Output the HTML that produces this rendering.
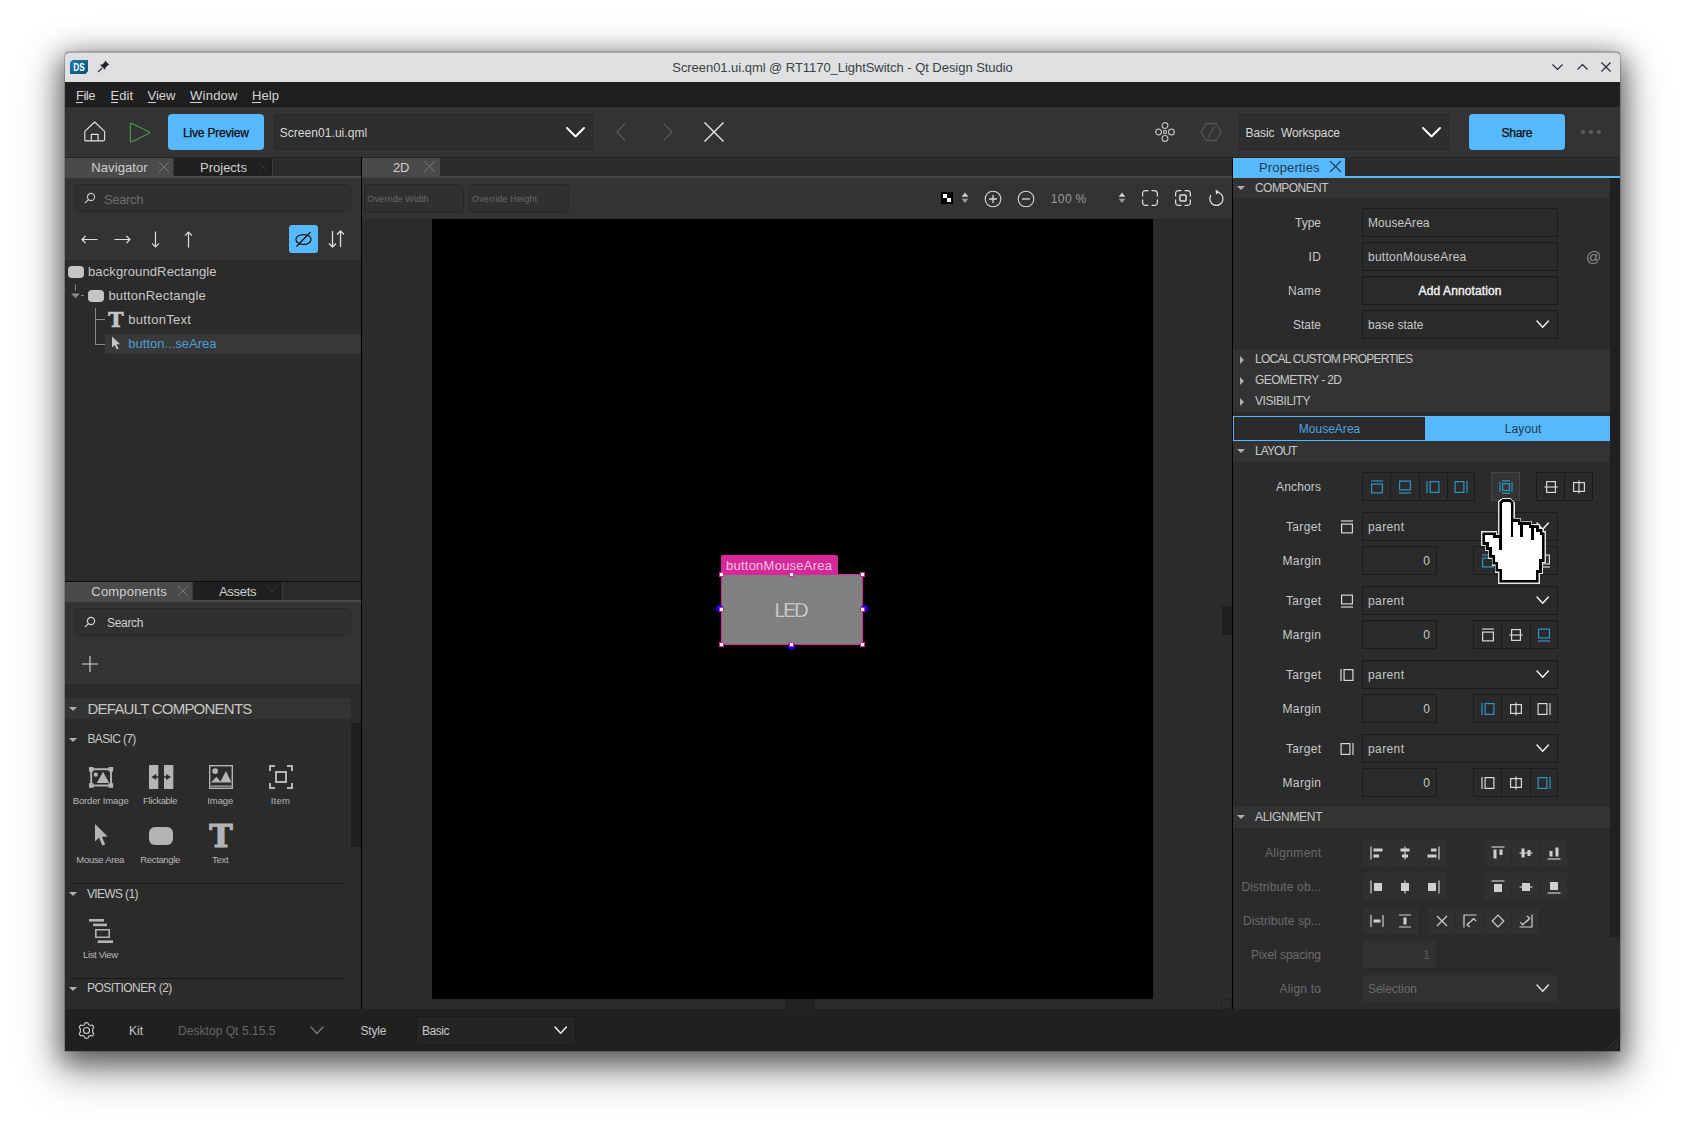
<!DOCTYPE html>
<html lang="en"><head><meta charset="utf-8"><title>Qt Design Studio</title><style>html,body{margin:0;padding:0}body{width:1685px;height:1128px;background:#ffffff;position:relative;overflow:hidden;font-family:"Liberation Sans", sans-serif}.a{position:absolute;display:block}.t{white-space:pre}svg{overflow:visible}</style></head><body>
<div class="a" style="left:65px;top:52px;width:1555px;height:999px;background:#1f1f1f;border-radius:4px 4px 0 0;box-shadow:0 0 0 0.5px rgba(0,0,0,.35),0 8px 26px 4px rgba(0,0,0,.50),0 16px 46px 6px rgba(0,0,0,.30);"></div>
<div class="a" style="left:65px;top:52px;width:1555px;height:30px;background:#dee0e2;border-radius:4px 4px 0 0;border-top:1px solid #a8aaac;box-sizing:border-box;"></div>
<span class="a t" style="left:672.25px;top:59.00px;font-size:13px;line-height:18px;color:#3d4145;letter-spacing:-0.045px;">Screen01.ui.qml @ RT1170_LightSwitch - Qt Design Studio</span>
<svg class="a" style="left:70px;top:60px;" width="18" height="14" viewBox="0 0 18 14"><defs><linearGradient id="dsg" x1="0" y1="0" x2="1" y2="1"><stop offset="0" stop-color="#1a7fb5"/><stop offset="1" stop-color="#0b4b73"/></linearGradient></defs><path d="M2.5 0 H18 V11 L15.5 14 H0 V2.5 Z" fill="url(#dsg)"/><text x="3.3" y="11" font-family="Liberation Sans, sans-serif" font-size="10.6" font-weight="700" fill="#fff" textLength="11.4" lengthAdjust="spacingAndGlyphs">DS</text></svg>
<svg class="a" style="left:97px;top:60px;" width="13" height="13" viewBox="0 0 13 13"><path d="M1 12 L5.2 7.8" stroke="#232629" stroke-width="1.1" fill="none"/><path d="M8.2 0.8 L12.2 4.8 L10.6 5.6 L8.4 7.8 L8.2 10 L3 4.8 L5.2 4.6 L7.4 2.4 Z" fill="#232629"/></svg>
<svg class="a" style="left:1552.0px;top:64px;" width="11" height="6" viewBox="0 0 11 6"><path d="M0.5 0.5 L5.5 5.5 L10.5 0.5" fill="none" stroke="#232629" stroke-width="1.1"/></svg>
<svg class="a" style="left:1576.5px;top:63.5px;" width="11" height="6" viewBox="0 0 11 6"><path d="M0.5 5.5 L5.5 0.5 L10.5 5.5" fill="none" stroke="#232629" stroke-width="1.1"/></svg>
<svg class="a" style="left:1601px;top:62px;" width="10" height="10" viewBox="0 0 10 10"><path d="M0.5 0.5 L9.5 9.5 M9.5 0.5 L0.5 9.5" fill="none" stroke="#232629" stroke-width="1.1"/></svg>
<div class="a" style="left:65px;top:82px;width:1555px;height:25px;background:#1f1f1f;"></div>
<span class="a t" style="left:76.00px;top:87.00px;font-size:13px;line-height:18px;color:#d6d6d6;letter-spacing:-0.484px;">File</span>
<div class="a" style="left:76px;top:102.3px;width:7px;height:1px;background:#d6d6d6;"></div>
<span class="a t" style="left:110.50px;top:87.00px;font-size:13px;line-height:18px;color:#d6d6d6;letter-spacing:0.031px;">Edit</span>
<div class="a" style="left:110.5px;top:102.3px;width:7.5px;height:1px;background:#d6d6d6;"></div>
<span class="a t" style="left:147.50px;top:87.00px;font-size:13px;line-height:18px;color:#d6d6d6;letter-spacing:0.016px;">View</span>
<div class="a" style="left:147.5px;top:102.3px;width:8px;height:1px;background:#d6d6d6;"></div>
<span class="a t" style="left:190.00px;top:87.00px;font-size:13px;line-height:18px;color:#d6d6d6;letter-spacing:0.250px;">Window</span>
<div class="a" style="left:190px;top:102.3px;width:11.5px;height:1px;background:#d6d6d6;"></div>
<span class="a t" style="left:252.00px;top:87.00px;font-size:13px;line-height:18px;color:#d6d6d6;letter-spacing:0.083px;">Help</span>
<div class="a" style="left:252px;top:102.3px;width:9px;height:1px;background:#d6d6d6;"></div>
<div class="a" style="left:65px;top:107px;width:1555px;height:50px;background:#333333;"></div>
<svg class="a" style="left:83.5px;top:120.8px;" width="21" height="21" viewBox="0 0 21 21"><path d="M0.8 10.4 L10.7 1 L20.6 10.4 V18.4 Q20.6 19.9 19.1 19.9 H2.3 Q0.8 19.9 0.8 18.4 Z M7.3 19.9 V13.3 H14.1 V19.9" fill="none" stroke="#e2e2e2" stroke-width="1.15" stroke-linejoin="round" stroke-linecap="round"/></svg>
<svg class="a" style="left:129px;top:121.5px;" width="22" height="21" viewBox="0 0 22 21"><path d="M2.4 1.3 Q1.3 0.8 1.3 2.1 V19.1 Q1.3 20.4 2.4 19.9 L20.2 11.2 Q21 10.6 20.2 10 Z" fill="none" stroke="#4c9a4c" stroke-width="1.15" stroke-linejoin="round"/></svg>
<div class="a" style="left:168px;top:114px;width:96px;height:36px;background:#57b9fc;border-radius:4px;"></div>
<span class="a t" style="left:183.00px;top:124.50px;font-size:12px;line-height:17px;color:#0b0b0b;letter-spacing:-0.185px;-webkit-text-stroke:0.25px #0b0b0b;">Live Preview</span>
<div class="a" style="left:274px;top:114px;width:319px;height:36px;background:#2e2e2e;border:1px solid #2a2a2a;box-sizing:border-box;border-radius:3px;"></div>
<span class="a t" style="left:279.70px;top:124.50px;font-size:12px;line-height:17px;color:#d8d8d8;letter-spacing:0.056px;">Screen01.ui.qml</span>
<svg class="a" style="left:566.5px;top:128.25px;" width="17" height="8.5" viewBox="0 0 17 8.5"><path d="M0 0 L8.5 8.5 L17 0" fill="none" stroke="#ffffff" stroke-width="2" stroke-linecap="round" stroke-linejoin="round"/></svg>
<svg class="a" style="left:616px;top:123px;" width="10" height="18" viewBox="0 0 10 18"><path d="M9 0.5 L1 9 L9 17.5" fill="none" stroke="#5a5a5a" stroke-width="1.2"/></svg>
<svg class="a" style="left:663px;top:123px;" width="10" height="18" viewBox="0 0 10 18"><path d="M1 0.5 L9 9 L1 17.5" fill="none" stroke="#5a5a5a" stroke-width="1.2"/></svg>
<svg class="a" style="left:703.5px;top:122px;" width="20" height="20" viewBox="0 0 20 20"><path d="M0.5 0.5 L19.5 19.5 M19.5 0.5 L0.5 19.5" fill="none" stroke="#f0f0f0" stroke-width="1.3"/></svg>
<svg class="a" style="left:1155px;top:122px;" width="20" height="20" viewBox="0 0 20 20"><g fill="none" stroke="#bdbdbd" stroke-width="1.2"><circle cx="10" cy="3.6" r="2.9"/><circle cx="10" cy="16.4" r="2.9"/><circle cx="3.6" cy="10" r="2.9"/><circle cx="16.4" cy="10" r="2.9"/><circle cx="10" cy="10" r="1.6"/></g></svg>
<svg class="a" style="left:1200px;top:122px;" width="22" height="20" viewBox="0 0 22 20"><g fill="none" stroke="#555" stroke-width="1.3" stroke-linejoin="round"><path d="M6 1.5 H16 L21 10 L16 18.5 H6 L1 10 Z"/><path d="M14.5 4.5 L8 15.5"/></g></svg>
<div class="a" style="left:1239px;top:114px;width:210px;height:36px;background:#2e2e2e;border:1px solid #2a2a2a;box-sizing:border-box;border-radius:3px;"></div>
<span class="a t" style="left:1245.50px;top:124.50px;font-size:12px;line-height:17px;color:#d8d8d8;letter-spacing:-0.087px;">Basic  Workspace</span>
<svg class="a" style="left:1422.5px;top:128.25px;" width="17" height="8.5" viewBox="0 0 17 8.5"><path d="M0 0 L8.5 8.5 L17 0" fill="none" stroke="#ffffff" stroke-width="2" stroke-linecap="round" stroke-linejoin="round"/></svg>
<div class="a" style="left:1469px;top:114px;width:96px;height:36px;background:#57b9fc;border-radius:4px;"></div>
<span class="a t" style="left:1501.50px;top:124.50px;font-size:12px;line-height:17px;color:#0b0b0b;letter-spacing:-0.258px;-webkit-text-stroke:0.25px #0b0b0b;">Share</span>
<div class="a" style="left:1581.2px;top:130.2px;width:4px;height:4px;background:#5e5e5e;border-radius:2px;"></div>
<div class="a" style="left:1589.1px;top:130.2px;width:4px;height:4px;background:#5e5e5e;border-radius:2px;"></div>
<div class="a" style="left:1597px;top:130.2px;width:4px;height:4px;background:#5e5e5e;border-radius:2px;"></div>
<div class="a" style="left:65px;top:157px;width:296px;height:852px;background:#2b2b2b;"></div>
<div class="a" style="left:361px;top:157px;width:1px;height:852px;background:#000;"></div>
<div class="a" style="left:65px;top:157px;width:296px;height:1px;background:#262626;"></div>
<div class="a" style="left:65px;top:158px;width:109px;height:18px;background:#4a4a4a;"></div>
<div class="a" style="left:174px;top:158px;width:98px;height:18px;background:#1f1f1f;"></div>
<div class="a" style="left:272px;top:158px;width:1px;height:18px;background:#3a3a3a;"></div>
<div class="a" style="left:173px;top:158px;width:1px;height:18px;background:#3a3a3a;"></div>
<div class="a" style="left:65px;top:176px;width:296px;height:2px;background:#4a4a4a;"></div>
<span class="a t" style="left:91.30px;top:159.00px;font-size:13px;line-height:18px;color:#d0d0d0;letter-spacing:0.095px;">Navigator</span>
<svg class="a" style="left:159px;top:162px;" width="10" height="10" viewBox="0 0 10 10"><path d="M0 0 L10 10 M10 0 L0 10" fill="none" stroke="#777" stroke-width="1"/></svg>
<span class="a t" style="left:200.00px;top:159.00px;font-size:13px;line-height:18px;color:#d0d0d0;letter-spacing:0.004px;">Projects</span>
<svg class="a" style="left:258px;top:162px;" width="10" height="10" viewBox="0 0 10 10"><path d="M0 0 L10 10 M10 0 L0 10" fill="none" stroke="#2e2e2e" stroke-width="1"/></svg>
<div class="a" style="left:65px;top:178px;width:296px;height:82px;background:#333333;"></div>
<div class="a" style="left:75px;top:184px;width:276px;height:28px;background:#303030;border:1px solid #282828;box-sizing:border-box;border-radius:4px;"></div>
<svg class="a" style="left:84px;top:192px;" width="12" height="12" viewBox="0 0 12 12"><circle cx="7" cy="5" r="3.6" fill="none" stroke="#c0c0c0" stroke-width="1.2"/><path d="M4.4 7.6 L1 11" stroke="#c0c0c0" stroke-width="1.2"/></svg>
<span class="a t" style="left:104.00px;top:191.00px;font-size:13px;line-height:18px;color:#6e6e6e;letter-spacing:-0.341px;">Search</span>
<svg class="a" style="left:80.5px;top:234.5px;" width="17" height="9" viewBox="0 0 17 9"><path d="M16.5 4.5 H1 M4.6 1 L1 4.5 L4.6 8" fill="none" stroke="#dcdcdc" stroke-width="1.2"/></svg>
<svg class="a" style="left:113.5px;top:234.5px;" width="17" height="9" viewBox="0 0 17 9"><path d="M0.5 4.5 H16 M12.4 1 L16 4.5 L12.4 8" fill="none" stroke="#dcdcdc" stroke-width="1.2"/></svg>
<svg class="a" style="left:150.5px;top:231px;" width="9" height="17" viewBox="0 0 9 17"><path d="M4.5 0.5 V16 M1 12.4 L4.5 16 L8 12.4" fill="none" stroke="#dcdcdc" stroke-width="1.2"/></svg>
<svg class="a" style="left:183.5px;top:231px;" width="9" height="17" viewBox="0 0 9 17"><path d="M4.5 16.5 V1 M1 4.6 L4.5 1 L8 4.6" fill="none" stroke="#dcdcdc" stroke-width="1.2"/></svg>
<div class="a" style="left:289px;top:225px;width:29px;height:28px;background:#57b9fc;border-radius:3px;"></div>
<svg class="a" style="left:294px;top:230px;" width="19" height="18" viewBox="0 0 19 18"><ellipse cx="9.5" cy="9.5" rx="7.6" ry="4.8" fill="none" stroke="#111" stroke-width="1.2"/><path d="M2.5 16.5 L16.5 2" stroke="#111" stroke-width="1.2"/></svg>
<svg class="a" style="left:328px;top:230px;" width="17" height="18" viewBox="0 0 17 18"><path d="M4.5 1 V17 M1 13.5 L4.5 17 L8 13.5 M12.5 17 V1 M9 4.5 L12.5 1 L16 4.5" fill="none" stroke="#dcdcdc" stroke-width="1.3"/></svg>
<div class="a" style="left:68px;top:266px;width:16px;height:12px;background:#c4c4c4;border-radius:4px;"></div>
<span class="a t" style="left:88.00px;top:263.00px;font-size:13px;line-height:18px;color:#c8c8c8;letter-spacing:0.118px;">backgroundRectangle</span>
<svg class="a" style="left:70px;top:284px;" width="16" height="16" viewBox="0 0 16 16"><path d="M5.5 0.5 V6.5" stroke="#888" stroke-width="1"/><path d="M1 9.5 H10 L5.5 14 Z" fill="#8c8c8c"/><path d="M11 11.5 H14" stroke="#888" stroke-width="1"/></svg>
<div class="a" style="left:88px;top:290px;width:16px;height:12px;background:#c4c4c4;border-radius:4px;"></div>
<span class="a t" style="left:108.40px;top:287.00px;font-size:13px;line-height:18px;color:#c8c8c8;letter-spacing:0.194px;">buttonRectangle</span>
<div class="a" style="left:95px;top:308px;width:1px;height:37px;background:#8a8a8a;"></div>
<div class="a" style="left:95px;top:319px;width:10px;height:1px;background:#8a8a8a;"></div>
<div class="a" style="left:95px;top:344px;width:10px;height:1px;background:#8a8a8a;"></div>
<span class="a t" style="left:108.33px;top:305.70px;font-size:20.5px;line-height:29px;color:#c4c4c4;font-weight:700;font-family:'DejaVu Serif',serif;-webkit-text-stroke:0.7px #c4c4c4;">T</span>
<span class="a t" style="left:128.30px;top:311.00px;font-size:13px;line-height:18px;color:#c8c8c8;letter-spacing:0.300px;">buttonText</span>
<div class="a" style="left:105px;top:334px;width:256px;height:20px;background:#383838;"></div>
<svg class="a" style="left:111px;top:336px;" width="10" height="15" viewBox="0 0 10 15"><path d="M1 0.5 V11.5 L3.8 8.9 L5.8 13.6 L7.6 12.8 L5.6 8.3 L9.2 8.3 Z" fill="#c4c4c4"/></svg>
<span class="a t" style="left:128.30px;top:335.00px;font-size:13px;line-height:18px;color:#4b9fd9;letter-spacing:0.009px;">button...seArea</span>
<div class="a" style="left:65px;top:581px;width:296px;height:1px;background:#0d0d0d;"></div>
<div class="a" style="left:65px;top:582px;width:128px;height:18px;background:#4a4a4a;"></div>
<div class="a" style="left:193px;top:582px;width:89px;height:18px;background:#1f1f1f;"></div>
<div class="a" style="left:282px;top:582px;width:1px;height:18px;background:#3a3a3a;"></div>
<div class="a" style="left:192px;top:582px;width:1px;height:18px;background:#3a3a3a;"></div>
<div class="a" style="left:65px;top:600px;width:296px;height:2px;background:#4a4a4a;"></div>
<span class="a t" style="left:91.30px;top:583.00px;font-size:13px;line-height:18px;color:#d0d0d0;letter-spacing:0.198px;">Components</span>
<svg class="a" style="left:177.5px;top:586px;" width="10" height="10" viewBox="0 0 10 10"><path d="M0 0 L10 10 M10 0 L0 10" fill="none" stroke="#777" stroke-width="1"/></svg>
<span class="a t" style="left:219.00px;top:583.00px;font-size:13px;line-height:18px;color:#d0d0d0;letter-spacing:-0.303px;">Assets</span>
<svg class="a" style="left:267px;top:586px;" width="10" height="10" viewBox="0 0 10 10"><path d="M0 0 L10 10 M10 0 L0 10" fill="none" stroke="#2e2e2e" stroke-width="1"/></svg>
<div class="a" style="left:65px;top:602px;width:296px;height:82px;background:#333333;"></div>
<div class="a" style="left:75px;top:608px;width:276px;height:28px;background:#303030;border:1px solid #282828;box-sizing:border-box;border-radius:4px;"></div>
<svg class="a" style="left:84px;top:616px;" width="12" height="12" viewBox="0 0 12 12"><circle cx="7" cy="5" r="3.6" fill="none" stroke="#d0d0d0" stroke-width="1.2"/><path d="M4.4 7.6 L1 11" stroke="#d0d0d0" stroke-width="1.2"/></svg>
<span class="a t" style="left:107.00px;top:615.00px;font-size:12px;line-height:17px;color:#d0d0d0;letter-spacing:-0.306px;">Search</span>
<svg class="a" style="left:81.5px;top:655.5px;" width="16" height="16" viewBox="0 0 16 16"><path d="M8 0 V16 M0 8 H16" stroke="#d8d8d8" stroke-width="1.1"/></svg>
<div class="a" style="left:65px;top:698px;width:286px;height:21px;background:#333333;"></div>
<svg class="a" style="left:69px;top:706.5px;" width="8" height="4" viewBox="0 0 8 4"><path d="M0 0 L8 0 L4 4 Z" fill="#b0b0b0"/></svg>
<span class="a t" style="left:87.50px;top:698.30px;font-size:15px;line-height:21px;color:#c8c8c8;letter-spacing:-0.765px;">DEFAULT COMPONENTS</span>
<div class="a" style="left:351px;top:723px;width:10px;height:124px;background:#202020;"></div>
<svg class="a" style="left:69px;top:737.5px;" width="8" height="4" viewBox="0 0 8 4"><path d="M0 0 L8 0 L4 4 Z" fill="#b0b0b0"/></svg>
<span class="a t" style="left:87.50px;top:731.30px;font-size:12px;line-height:17px;color:#c8c8c8;letter-spacing:-0.652px;">BASIC (7)</span>
<svg class="a" style="left:88.8px;top:765px;" width="24" height="24" viewBox="0 0 24 24"><rect x="2.2" y="4.2" width="19.8" height="16.3" fill="none" stroke="#b4b4b4" stroke-width="1.9"/><g fill="#b4b4b4"><rect x="0" y="2" width="4.6" height="4.6"/><rect x="19.6" y="2" width="4.6" height="4.6"/><rect x="0" y="18.2" width="4.6" height="4.6"/><rect x="19.6" y="18.2" width="4.6" height="4.6"/><circle cx="6.8" cy="9.7" r="2.1"/><path d="M7.8 18 L14 6.7 L20.2 18 Z"/></g></svg>
<span class="a t" style="left:72.70px;top:794.20px;font-size:9.5px;line-height:13px;color:#b8b8b8;letter-spacing:-0.142px;">Border Image</span>
<svg class="a" style="left:148.5px;top:765px;" width="24" height="24" viewBox="0 0 24 24"><g fill="#b4b4b4"><path d="M0 0 H9.3 V24 H0 Z M9.3 11.3 H7.3 V9 L2.3 12 L7.3 15 V12.7 H9.3 Z" fill-rule="evenodd"/><path d="M15 0 H24.3 V24 H15 Z M15 11.3 H17 V9 L22 12 L17 15 V12.7 H15 Z" fill-rule="evenodd"/></g></svg>
<span class="a t" style="left:143.05px;top:794.20px;font-size:9.5px;line-height:13px;color:#b8b8b8;letter-spacing:-0.375px;">Flickable</span>
<svg class="a" style="left:208.9px;top:765px;" width="24" height="24" viewBox="0 0 24 24"><rect x="0.7" y="0.7" width="22.6" height="22.6" fill="none" stroke="#b4b4b4" stroke-width="1.4"/><g fill="#b4b4b4"><circle cx="6.2" cy="6.1" r="2.9"/><path d="M2 17.6 L7.5 11.8 L11.4 16.6 L17 6 L22.5 17.6 Z"/><rect x="2" y="20.5" width="20.5" height="1.2"/></g></svg>
<span class="a t" style="left:207.30px;top:794.20px;font-size:9.5px;line-height:13px;color:#b8b8b8;letter-spacing:-0.102px;">Image</span>
<svg class="a" style="left:268.9px;top:765px;" width="24" height="24" viewBox="0 0 24 24"><g fill="none" stroke="#b4b4b4" stroke-width="2"><path d="M1 6 V1 H6 M18 1 H23 V6 M23 18 V23 H18 M6 23 H1 V18"/><rect x="7" y="7" width="10" height="10"/></g></svg>
<span class="a t" style="left:270.80px;top:794.20px;font-size:9.5px;line-height:13px;color:#b8b8b8;letter-spacing:0.172px;">Item</span>
<svg class="a" style="left:94px;top:824px;" width="14" height="24" viewBox="0 0 14 24"><path d="M1 0 V17.5 L5 13.7 L8.3 21.6 L11.2 20.4 L8 12.8 L13.6 12.6 Z" fill="#b4b4b4"/></svg>
<span class="a t" style="left:76.30px;top:853.20px;font-size:9.5px;line-height:13px;color:#b8b8b8;letter-spacing:-0.300px;">Mouse Area</span>
<div class="a" style="left:148.7px;top:827px;width:24.3px;height:18px;background:#b4b4b4;border-radius:6px;"></div>
<span class="a t" style="left:140.30px;top:853.20px;font-size:9.5px;line-height:13px;color:#b8b8b8;letter-spacing:-0.348px;">Rectangle</span>
<span class="a t" style="left:209.28px;top:814.30px;font-size:31.5px;line-height:44px;color:#b4b4b4;font-weight:700;font-family:'DejaVu Serif',serif;-webkit-text-stroke:1.05px #b4b4b4;">T</span>
<span class="a t" style="left:212.05px;top:853.20px;font-size:9.5px;line-height:13px;color:#b8b8b8;letter-spacing:-0.312px;">Text</span>
<div class="a" style="left:70px;top:883px;width:276px;height:1px;background:#1a1a1a;"></div>
<svg class="a" style="left:69px;top:892px;" width="8" height="4" viewBox="0 0 8 4"><path d="M0 0 L8 0 L4 4 Z" fill="#b0b0b0"/></svg>
<span class="a t" style="left:87.00px;top:885.80px;font-size:12px;line-height:17px;color:#c8c8c8;letter-spacing:-0.659px;">VIEWS (1)</span>
<svg class="a" style="left:88.8px;top:919px;" width="24" height="24" viewBox="0 0 24 24"><g fill="#b4b4b4"><rect x="0" y="0" width="15" height="2.6"/><rect x="4" y="4.6" width="14" height="2.6"/><rect x="8.7" y="21.4" width="15.3" height="2.6"/><path d="M6 10 H21 V19 H6 Z M7.6 11.6 V17.4 H19.4 V11.6 Z" fill-rule="evenodd"/></g></svg>
<span class="a t" style="left:83.00px;top:948.20px;font-size:9.5px;line-height:13px;color:#b8b8b8;letter-spacing:-0.355px;">List View</span>
<div class="a" style="left:70px;top:978px;width:276px;height:1px;background:#1a1a1a;"></div>
<svg class="a" style="left:69px;top:986.5px;" width="8" height="4" viewBox="0 0 8 4"><path d="M0 0 L8 0 L4 4 Z" fill="#b0b0b0"/></svg>
<span class="a t" style="left:87.00px;top:980.30px;font-size:12px;line-height:17px;color:#c8c8c8;letter-spacing:-0.517px;">POSITIONER (2)</span>
<div class="a" style="left:362px;top:157px;width:870px;height:852px;background:#2b2b2b;"></div>
<div class="a" style="left:362px;top:157px;width:870px;height:1px;background:#262626;"></div>
<div class="a" style="left:362px;top:158px;width:78px;height:18px;background:#4a4a4a;"></div>
<div class="a" style="left:362px;top:176px;width:870px;height:2px;background:#464646;"></div>
<span class="a t" style="left:393.00px;top:159.30px;font-size:13px;line-height:18px;color:#d0d0d0;letter-spacing:-0.125px;">2D</span>
<svg class="a" style="left:424.0px;top:161.0px;" width="11.0" height="11.0" viewBox="0 0 11.0 11.0"><path d="M0 0 L11.0 11.0 M11.0 0 L0 11.0" fill="none" stroke="#7a7a7a" stroke-width="1"/></svg>
<div class="a" style="left:362px;top:178px;width:870px;height:41px;background:#333333;"></div>
<div class="a" style="left:364px;top:184px;width:100px;height:28.5px;background:#303030;border:1px solid #282828;box-sizing:border-box;border-radius:4px;"></div>
<div class="a" style="left:469px;top:184px;width:100px;height:28.5px;background:#303030;border:1px solid #282828;box-sizing:border-box;border-radius:4px;"></div>
<span class="a t" style="left:367.30px;top:193.10px;font-size:9px;line-height:13px;color:#6a6a6a;letter-spacing:0.113px;">Override Width</span>
<span class="a t" style="left:472.00px;top:193.10px;font-size:9px;line-height:13px;color:#6a6a6a;letter-spacing:0.141px;">Override Height</span>
<div class="a" style="left:941px;top:192px;width:12px;height:12px;background:#000;"></div>
<div class="a" style="left:943px;top:194px;width:4px;height:4px;background:#fff;"></div>
<div class="a" style="left:947px;top:198px;width:4px;height:4px;background:#fff;"></div>
<svg class="a" style="left:961.4px;top:192px;" width="8" height="12" viewBox="0 0 8 12"><path d="M4 0.6 L7.4 4.8 H0.6 Z" fill="#cfcfcf"/><path d="M4 11 L7.4 6.8 H0.6 Z" fill="#9a9a9a"/></svg>
<svg class="a" style="left:984px;top:189.5px;" width="18" height="18" viewBox="0 0 18 18"><circle cx="9" cy="9" r="7.8" fill="none" stroke="#d6d6d6" stroke-width="1.1"/><path d="M9 5 V13 M5 9 H13" stroke="#d6d6d6" stroke-width="1.3"/></svg>
<svg class="a" style="left:1017px;top:189.5px;" width="18" height="18" viewBox="0 0 18 18"><circle cx="9" cy="9" r="7.8" fill="none" stroke="#d6d6d6" stroke-width="1.1"/><path d="M5 9 H13" stroke="#d6d6d6" stroke-width="1.3"/></svg>
<span class="a t" style="left:1050.80px;top:190.90px;font-size:12px;line-height:17px;color:#9a9a9a;letter-spacing:0.367px;">100 %</span>
<svg class="a" style="left:1118.3px;top:192px;" width="8" height="12" viewBox="0 0 8 12"><path d="M4 0.6 L7.4 4.8 H0.6 Z" fill="#cfcfcf"/><path d="M4 11 L7.4 6.8 H0.6 Z" fill="#9a9a9a"/></svg>
<svg class="a" style="left:1142px;top:190px;" width="16" height="16" viewBox="0 0 16 16"><g fill="none" stroke="#e0e0e0" stroke-width="1.2"><path d="M0.6 6.4 V3.8 Q0.6 0.6 3.8 0.6 H6.4"/><path d="M9.6 0.6 H12.2 Q15.4 0.6 15.4 3.8 V6.4"/><path d="M15.4 9.6 V12.2 Q15.4 15.4 12.2 15.4 H9.6"/><path d="M6.4 15.4 H3.8 Q0.6 15.4 0.6 12.2 V9.6"/></g></svg>
<svg class="a" style="left:1175px;top:190px;" width="16" height="16" viewBox="0 0 16 16"><g fill="none" stroke="#e0e0e0" stroke-width="1.2"><path d="M0.6 6.4 V3.8 Q0.6 0.6 3.8 0.6 H6.4"/><path d="M9.6 0.6 H12.2 Q15.4 0.6 15.4 3.8 V6.4"/><path d="M15.4 9.6 V12.2 Q15.4 15.4 12.2 15.4 H9.6"/><path d="M6.4 15.4 H3.8 Q0.6 15.4 0.6 12.2 V9.6"/></g><rect x="4.9" y="4.9" width="6.2" height="6.2" rx="1" fill="none" stroke="#e0e0e0" stroke-width="1.5"/></svg>
<svg class="a" style="left:1208px;top:189px;" width="16" height="18" viewBox="0 0 16 18"><path d="M8.6 3.2 A6.6 6.6 0 1 1 2.9 6.2" fill="none" stroke="#e0e0e0" stroke-width="1.2"/><path d="M7.6 0.6 L11.4 3 L8 5.6 Z" fill="#e0e0e0"/></svg>
<div class="a" style="left:432px;top:219px;width:721px;height:780px;background:#000;"></div>
<div class="a" style="left:785px;top:999px;width:30px;height:10px;background:#222;"></div>
<div class="a" style="left:1222px;top:606px;width:10px;height:29px;background:#1f1f1f;"></div>
<div class="a" style="left:1221px;top:999px;width:11px;height:10px;background:#2b2b2b;border:1px solid #242424;box-sizing:border-box;"></div>
<div class="a" style="left:721px;top:555px;width:117px;height:19px;background:#d6289b;border-radius:2px 2px 0 0;"></div>
<div class="a" style="left:721.5px;top:574px;width:141px;height:70px;background:#808080;"></div>
<div class="a" style="left:721px;top:573.5px;width:142px;height:71px;border:1px solid #d6289b;box-sizing:border-box;"></div>
<span class="a t" style="left:726.00px;top:556.50px;font-size:13px;line-height:18px;color:#f4c4e4;letter-spacing:0.241px;">buttonMouseArea</span>
<span class="a t" style="left:774.60px;top:596.30px;font-size:20px;line-height:28px;color:#e6e6e6;letter-spacing:-2.353px;-webkit-text-stroke:0.5px #808080;">LED</span>
<div class="a" style="left:716.0px;top:605.2px;width:7px;height:7px;background:#0000ee;border-radius:3.5px;"></div>
<div class="a" style="left:860.5px;top:605.2px;width:7px;height:7px;background:#0000ee;border-radius:3.5px;"></div>
<div class="a" style="left:788.3px;top:642.5px;width:7px;height:7px;background:#0000ee;border-radius:3.5px;"></div>
<div class="a" style="left:719.2px;top:571.5px;width:5px;height:5px;background:#fff;border:1px solid #d6289b;box-sizing:border-box;"></div>
<div class="a" style="left:789.3px;top:571.5px;width:5px;height:5px;background:#fff;border:1px solid #d6289b;box-sizing:border-box;"></div>
<div class="a" style="left:859.5px;top:571.5px;width:5px;height:5px;background:#fff;border:1px solid #d6289b;box-sizing:border-box;"></div>
<div class="a" style="left:719.2px;top:606.5px;width:5px;height:5px;background:#fff;border:1px solid #d6289b;box-sizing:border-box;"></div>
<div class="a" style="left:859.5px;top:606.5px;width:5px;height:5px;background:#fff;border:1px solid #d6289b;box-sizing:border-box;"></div>
<div class="a" style="left:719.2px;top:641.5px;width:5px;height:5px;background:#fff;border:1px solid #d6289b;box-sizing:border-box;"></div>
<div class="a" style="left:789.3px;top:641.5px;width:5px;height:5px;background:#fff;border:1px solid #d6289b;box-sizing:border-box;"></div>
<div class="a" style="left:859.5px;top:641.5px;width:5px;height:5px;background:#fff;border:1px solid #d6289b;box-sizing:border-box;"></div>
<div class="a" style="left:1232px;top:157px;width:1px;height:852px;background:#000;"></div>
<div class="a" style="left:1233px;top:157px;width:387px;height:852px;background:#2b2b2b;"></div>
<div class="a" style="left:1233px;top:157px;width:387px;height:1px;background:#262626;"></div>
<div class="a" style="left:1233px;top:158px;width:112px;height:18px;background:#57b9fc;"></div>
<div class="a" style="left:1233px;top:176px;width:387px;height:2px;background:#57b9fc;"></div>
<span class="a t" style="left:1259.00px;top:159.30px;font-size:13px;line-height:18px;color:#1d3a52;letter-spacing:0.139px;">Properties</span>
<svg class="a" style="left:1330.0px;top:161.0px;" width="11.0" height="11.0" viewBox="0 0 11.0 11.0"><path d="M0 0 L11.0 11.0 M11.0 0 L0 11.0" fill="none" stroke="#1f3c55" stroke-width="1.1"/></svg>
<div class="a" style="left:1610px;top:178px;width:10px;height:759px;background:#202020;"></div>
<div class="a" style="left:1610px;top:937px;width:10px;height:72px;background:#2b2b2b;"></div>
<div class="a" style="left:1233px;top:178px;width:377px;height:20px;background:#333333;"></div>
<svg class="a" style="left:1237px;top:185.7px;" width="8" height="4" viewBox="0 0 8 4"><path d="M0 0 L8 0 L4 4 Z" fill="#b0b0b0"/></svg>
<span class="a t" style="left:1255.00px;top:179.50px;font-size:12px;line-height:17px;color:#c8c8c8;letter-spacing:-0.562px;">COMPONENT</span>
<div class="a" style="left:1362px;top:208px;width:196px;height:29px;background:#2a2a2a;border:1px solid #1b1b1b;box-sizing:border-box;"></div>
<span class="a t" style="left:1295.00px;top:214.80px;font-size:12px;line-height:17px;color:#c8c8c8;letter-spacing:-0.005px;">Type</span>
<span class="a t" style="left:1368.00px;top:214.80px;font-size:12px;line-height:17px;color:#c8c8c8;letter-spacing:0.016px;">MouseArea</span>
<div class="a" style="left:1362px;top:242px;width:196px;height:29px;background:#2a2a2a;border:1px solid #1b1b1b;box-sizing:border-box;"></div>
<span class="a t" style="left:1308.50px;top:248.80px;font-size:12px;line-height:17px;color:#c8c8c8;letter-spacing:0.500px;">ID</span>
<span class="a t" style="left:1368.00px;top:248.80px;font-size:12px;line-height:17px;color:#c8c8c8;letter-spacing:0.255px;">buttonMouseArea</span>
<span class="a t" style="left:1585.88px;top:246.00px;font-size:15px;line-height:21px;color:#8c8c8c;">@</span>
<div class="a" style="left:1362px;top:276px;width:196px;height:29px;background:#2a2a2a;border:1px solid #1b1b1b;box-sizing:border-box;"></div>
<span class="a t" style="left:1288.00px;top:282.80px;font-size:12px;line-height:17px;color:#c8c8c8;letter-spacing:0.328px;">Name</span>
<span class="a t" style="left:1418.50px;top:283.00px;font-size:12px;line-height:17px;color:#f4f4f4;letter-spacing:0.123px;-webkit-text-stroke:0.35px #f4f4f4;">Add Annotation</span>
<div class="a" style="left:1362px;top:310px;width:196px;height:29px;background:#2a2a2a;border:1px solid #1b1b1b;box-sizing:border-box;"></div>
<span class="a t" style="left:1293.00px;top:316.80px;font-size:12px;line-height:17px;color:#c8c8c8;letter-spacing:-0.008px;">State</span>
<span class="a t" style="left:1368.00px;top:316.80px;font-size:12px;line-height:17px;color:#c8c8c8;letter-spacing:0.014px;">base state</span>
<svg class="a" style="left:1537.3px;top:321.4px;" width="11.4" height="6.2" viewBox="0 0 11.4 6.2"><path d="M0 0 L5.7 6.2 L11.4 0" fill="none" stroke="#f0f0f0" stroke-width="1.5" stroke-linecap="round" stroke-linejoin="round"/></svg>
<div class="a" style="left:1233px;top:349px;width:377px;height:63px;background:#333333;"></div>
<svg class="a" style="left:1239.5px;top:355.5px;" width="4" height="8" viewBox="0 0 4 8"><path d="M0 0 L4 4 L0 8 Z" fill="#b0b0b0"/></svg>
<span class="a t" style="left:1255.00px;top:351.00px;font-size:12px;line-height:17px;color:#c8c8c8;letter-spacing:-0.750px;">LOCAL CUSTOM PROPERTIES</span>
<svg class="a" style="left:1239.5px;top:376.5px;" width="4" height="8" viewBox="0 0 4 8"><path d="M0 0 L4 4 L0 8 Z" fill="#b0b0b0"/></svg>
<span class="a t" style="left:1255.00px;top:372.00px;font-size:12px;line-height:17px;color:#c8c8c8;letter-spacing:-0.604px;">GEOMETRY - 2D</span>
<svg class="a" style="left:1239.5px;top:397.5px;" width="4" height="8" viewBox="0 0 4 8"><path d="M0 0 L4 4 L0 8 Z" fill="#b0b0b0"/></svg>
<span class="a t" style="left:1255.00px;top:393.00px;font-size:12px;line-height:17px;color:#c8c8c8;letter-spacing:-0.429px;">VISIBILITY</span>
<div class="a" style="left:1233px;top:416px;width:377px;height:25px;background:#57b9fc;"></div>
<div class="a" style="left:1234px;top:417px;width:191px;height:23px;background:#2a2a2a;"></div>
<span class="a t" style="left:1298.75px;top:421.00px;font-size:12px;line-height:17px;color:#4ba3e0;letter-spacing:0.016px;">MouseArea</span>
<span class="a t" style="left:1504.75px;top:421.00px;font-size:12px;line-height:17px;color:#1d3a52;letter-spacing:0.094px;">Layout</span>
<div class="a" style="left:1233px;top:441px;width:377px;height:21px;background:#333333;"></div>
<svg class="a" style="left:1237px;top:449.2px;" width="8" height="4" viewBox="0 0 8 4"><path d="M0 0 L8 0 L4 4 Z" fill="#b0b0b0"/></svg>
<span class="a t" style="left:1255.00px;top:443.00px;font-size:12px;line-height:17px;color:#c8c8c8;letter-spacing:-0.925px;">LAYOUT</span>
<span class="a t" style="left:1276.00px;top:478.80px;font-size:12px;line-height:17px;color:#c8c8c8;letter-spacing:0.161px;">Anchors</span>
<div class="a" style="left:1362px;top:472px;width:113px;height:29px;background:#2a2a2a;border:1px solid #1b1b1b;box-sizing:border-box;"></div>
<div class="a" style="left:1390px;top:472px;width:1px;height:29px;background:#1b1b1b;"></div>
<div class="a" style="left:1419px;top:472px;width:1px;height:29px;background:#1b1b1b;"></div>
<div class="a" style="left:1447px;top:472px;width:1px;height:29px;background:#1b1b1b;"></div>
<svg class="a" style="left:1369.5px;top:479.5px;" width="14" height="14" viewBox="0 0 14 14"><path d="M1 1 H13" stroke="#2f95c8" stroke-width="1.2"/><rect x="1.6" y="4.1" width="10.8" height="8.8" fill="none" stroke="#2f95c8" stroke-width="1.2"/></svg>
<svg class="a" style="left:1397.5px;top:479.5px;" width="14" height="14" viewBox="0 0 14 14"><path d="M1 13 H13" stroke="#2f95c8" stroke-width="1.2"/><rect x="1.6" y="1.1" width="10.8" height="8.8" fill="none" stroke="#2f95c8" stroke-width="1.2"/></svg>
<svg class="a" style="left:1425.5px;top:479.5px;" width="14" height="14" viewBox="0 0 14 14"><path d="M1 1 V13" stroke="#2f95c8" stroke-width="1.2"/><rect x="4.1" y="1.6" width="8.8" height="10.8" fill="none" stroke="#2f95c8" stroke-width="1.2"/></svg>
<svg class="a" style="left:1453.5px;top:479.5px;" width="14" height="14" viewBox="0 0 14 14"><path d="M13 1 V13" stroke="#2f95c8" stroke-width="1.2"/><rect x="1.1" y="1.6" width="8.8" height="10.8" fill="none" stroke="#2f95c8" stroke-width="1.2"/></svg>
<div class="a" style="left:1491px;top:472px;width:29px;height:29px;background:#343434;border:1px solid #454545;box-sizing:border-box;"></div>
<svg class="a" style="left:1498.5px;top:479.5px;" width="14" height="14" viewBox="0 0 14 14"><path d="M1 2 V12 M13 2 V12 M3 0.8 H11 M3 13.2 H11" stroke="#2f95c8" stroke-width="1.2"/><rect x="3.6" y="3.6" width="6.8" height="6.8" fill="none" stroke="#2f95c8" stroke-width="1.2"/></svg>
<div class="a" style="left:1536px;top:472px;width:57px;height:29px;background:#2a2a2a;border:1px solid #1b1b1b;box-sizing:border-box;"></div>
<div class="a" style="left:1564px;top:472px;width:1px;height:29px;background:#1b1b1b;"></div>
<svg class="a" style="left:1543.5px;top:479.5px;" width="14" height="14" viewBox="0 0 14 14"><path d="M0.5 7 H13.5" stroke="#d8d8d8" stroke-width="1.2"/><rect x="2.6" y="1.6" width="8.8" height="10.8" fill="none" stroke="#d8d8d8" stroke-width="1.2"/></svg>
<svg class="a" style="left:1571.5px;top:479.5px;" width="14" height="14" viewBox="0 0 14 14"><path d="M7 0.5 V13.5" stroke="#d8d8d8" stroke-width="1.2"/><rect x="1.6" y="2.6" width="10.8" height="8.8" fill="none" stroke="#d8d8d8" stroke-width="1.2"/></svg>
<span class="a t" style="left:1286.00px;top:518.80px;font-size:12px;line-height:17px;color:#c8c8c8;letter-spacing:0.328px;">Target</span>
<svg class="a" style="left:1340px;top:519.5px;" width="14" height="14" viewBox="0 0 14 14"><path d="M1 1 H13" stroke="#d8d8d8" stroke-width="1.2"/><rect x="1.6" y="4.1" width="10.8" height="8.8" fill="none" stroke="#d8d8d8" stroke-width="1.2"/></svg>
<div class="a" style="left:1362px;top:512px;width:196px;height:29px;background:#2a2a2a;border:1px solid #1b1b1b;box-sizing:border-box;"></div>
<span class="a t" style="left:1368.00px;top:518.80px;font-size:12px;line-height:17px;color:#c8c8c8;letter-spacing:0.394px;">parent</span>
<svg class="a" style="left:1537.3px;top:523.4px;" width="11.4" height="6.2" viewBox="0 0 11.4 6.2"><path d="M0 0 L5.7 6.2 L11.4 0" fill="none" stroke="#f0f0f0" stroke-width="1.5" stroke-linecap="round" stroke-linejoin="round"/></svg>
<span class="a t" style="left:1282.50px;top:552.80px;font-size:12px;line-height:17px;color:#c8c8c8;letter-spacing:0.362px;">Margin</span>
<div class="a" style="left:1362px;top:546px;width:75px;height:29px;background:#2a2a2a;border:1px solid #1b1b1b;box-sizing:border-box;"></div>
<span class="a t" style="left:1423.30px;top:552.80px;font-size:12px;line-height:17px;color:#c8c8c8;">0</span>
<div class="a" style="left:1473px;top:546px;width:85px;height:29px;background:#2a2a2a;border:1px solid #1b1b1b;box-sizing:border-box;"></div>
<div class="a" style="left:1501px;top:546px;width:1px;height:29px;background:#1b1b1b;"></div>
<div class="a" style="left:1530px;top:546px;width:1px;height:29px;background:#1b1b1b;"></div>
<svg class="a" style="left:1480.5px;top:553.5px;" width="14" height="14" viewBox="0 0 14 14"><path d="M1 1 H13" stroke="#2f95c8" stroke-width="1.2"/><rect x="1.6" y="4.1" width="10.8" height="8.8" fill="none" stroke="#2f95c8" stroke-width="1.2"/></svg>
<svg class="a" style="left:1508.5px;top:553.5px;" width="14" height="14" viewBox="0 0 14 14"><path d="M0.5 7 H13.5" stroke="#d8d8d8" stroke-width="1.2"/><rect x="2.6" y="1.6" width="8.8" height="10.8" fill="none" stroke="#d8d8d8" stroke-width="1.2"/></svg>
<svg class="a" style="left:1536.5px;top:553.5px;" width="14" height="14" viewBox="0 0 14 14"><path d="M1 13 H13" stroke="#d8d8d8" stroke-width="1.2"/><rect x="1.6" y="1.1" width="10.8" height="8.8" fill="none" stroke="#d8d8d8" stroke-width="1.2"/></svg>
<span class="a t" style="left:1286.00px;top:592.80px;font-size:12px;line-height:17px;color:#c8c8c8;letter-spacing:0.328px;">Target</span>
<svg class="a" style="left:1340px;top:593.5px;" width="14" height="14" viewBox="0 0 14 14"><path d="M1 13 H13" stroke="#d8d8d8" stroke-width="1.2"/><rect x="1.6" y="1.1" width="10.8" height="8.8" fill="none" stroke="#d8d8d8" stroke-width="1.2"/></svg>
<div class="a" style="left:1362px;top:586px;width:196px;height:29px;background:#2a2a2a;border:1px solid #1b1b1b;box-sizing:border-box;"></div>
<span class="a t" style="left:1368.00px;top:592.80px;font-size:12px;line-height:17px;color:#c8c8c8;letter-spacing:0.394px;">parent</span>
<svg class="a" style="left:1537.3px;top:597.4px;" width="11.4" height="6.2" viewBox="0 0 11.4 6.2"><path d="M0 0 L5.7 6.2 L11.4 0" fill="none" stroke="#f0f0f0" stroke-width="1.5" stroke-linecap="round" stroke-linejoin="round"/></svg>
<span class="a t" style="left:1282.50px;top:626.80px;font-size:12px;line-height:17px;color:#c8c8c8;letter-spacing:0.362px;">Margin</span>
<div class="a" style="left:1362px;top:620px;width:75px;height:29px;background:#2a2a2a;border:1px solid #1b1b1b;box-sizing:border-box;"></div>
<span class="a t" style="left:1423.30px;top:626.80px;font-size:12px;line-height:17px;color:#c8c8c8;">0</span>
<div class="a" style="left:1473px;top:620px;width:85px;height:29px;background:#2a2a2a;border:1px solid #1b1b1b;box-sizing:border-box;"></div>
<div class="a" style="left:1501px;top:620px;width:1px;height:29px;background:#1b1b1b;"></div>
<div class="a" style="left:1530px;top:620px;width:1px;height:29px;background:#1b1b1b;"></div>
<svg class="a" style="left:1480.5px;top:627.5px;" width="14" height="14" viewBox="0 0 14 14"><path d="M1 1 H13" stroke="#d8d8d8" stroke-width="1.2"/><rect x="1.6" y="4.1" width="10.8" height="8.8" fill="none" stroke="#d8d8d8" stroke-width="1.2"/></svg>
<svg class="a" style="left:1508.5px;top:627.5px;" width="14" height="14" viewBox="0 0 14 14"><path d="M0.5 7 H13.5" stroke="#d8d8d8" stroke-width="1.2"/><rect x="2.6" y="1.6" width="8.8" height="10.8" fill="none" stroke="#d8d8d8" stroke-width="1.2"/></svg>
<svg class="a" style="left:1536.5px;top:627.5px;" width="14" height="14" viewBox="0 0 14 14"><path d="M1 13 H13" stroke="#2f95c8" stroke-width="1.2"/><rect x="1.6" y="1.1" width="10.8" height="8.8" fill="none" stroke="#2f95c8" stroke-width="1.2"/></svg>
<span class="a t" style="left:1286.00px;top:666.80px;font-size:12px;line-height:17px;color:#c8c8c8;letter-spacing:0.328px;">Target</span>
<svg class="a" style="left:1340px;top:667.5px;" width="14" height="14" viewBox="0 0 14 14"><path d="M1 1 V13" stroke="#d8d8d8" stroke-width="1.2"/><rect x="4.1" y="1.6" width="8.8" height="10.8" fill="none" stroke="#d8d8d8" stroke-width="1.2"/></svg>
<div class="a" style="left:1362px;top:660px;width:196px;height:29px;background:#2a2a2a;border:1px solid #1b1b1b;box-sizing:border-box;"></div>
<span class="a t" style="left:1368.00px;top:666.80px;font-size:12px;line-height:17px;color:#c8c8c8;letter-spacing:0.394px;">parent</span>
<svg class="a" style="left:1537.3px;top:671.4px;" width="11.4" height="6.2" viewBox="0 0 11.4 6.2"><path d="M0 0 L5.7 6.2 L11.4 0" fill="none" stroke="#f0f0f0" stroke-width="1.5" stroke-linecap="round" stroke-linejoin="round"/></svg>
<span class="a t" style="left:1282.50px;top:700.80px;font-size:12px;line-height:17px;color:#c8c8c8;letter-spacing:0.362px;">Margin</span>
<div class="a" style="left:1362px;top:694px;width:75px;height:29px;background:#2a2a2a;border:1px solid #1b1b1b;box-sizing:border-box;"></div>
<span class="a t" style="left:1423.30px;top:700.80px;font-size:12px;line-height:17px;color:#c8c8c8;">0</span>
<div class="a" style="left:1473px;top:694px;width:85px;height:29px;background:#2a2a2a;border:1px solid #1b1b1b;box-sizing:border-box;"></div>
<div class="a" style="left:1501px;top:694px;width:1px;height:29px;background:#1b1b1b;"></div>
<div class="a" style="left:1530px;top:694px;width:1px;height:29px;background:#1b1b1b;"></div>
<svg class="a" style="left:1480.5px;top:701.5px;" width="14" height="14" viewBox="0 0 14 14"><path d="M1 1 V13" stroke="#2f95c8" stroke-width="1.2"/><rect x="4.1" y="1.6" width="8.8" height="10.8" fill="none" stroke="#2f95c8" stroke-width="1.2"/></svg>
<svg class="a" style="left:1508.5px;top:701.5px;" width="14" height="14" viewBox="0 0 14 14"><path d="M7 0.5 V13.5" stroke="#d8d8d8" stroke-width="1.2"/><rect x="1.6" y="2.6" width="10.8" height="8.8" fill="none" stroke="#d8d8d8" stroke-width="1.2"/></svg>
<svg class="a" style="left:1536.5px;top:701.5px;" width="14" height="14" viewBox="0 0 14 14"><path d="M13 1 V13" stroke="#d8d8d8" stroke-width="1.2"/><rect x="1.1" y="1.6" width="8.8" height="10.8" fill="none" stroke="#d8d8d8" stroke-width="1.2"/></svg>
<span class="a t" style="left:1286.00px;top:740.80px;font-size:12px;line-height:17px;color:#c8c8c8;letter-spacing:0.328px;">Target</span>
<svg class="a" style="left:1340px;top:741.5px;" width="14" height="14" viewBox="0 0 14 14"><path d="M13 1 V13" stroke="#d8d8d8" stroke-width="1.2"/><rect x="1.1" y="1.6" width="8.8" height="10.8" fill="none" stroke="#d8d8d8" stroke-width="1.2"/></svg>
<div class="a" style="left:1362px;top:734px;width:196px;height:29px;background:#2a2a2a;border:1px solid #1b1b1b;box-sizing:border-box;"></div>
<span class="a t" style="left:1368.00px;top:740.80px;font-size:12px;line-height:17px;color:#c8c8c8;letter-spacing:0.394px;">parent</span>
<svg class="a" style="left:1537.3px;top:745.4px;" width="11.4" height="6.2" viewBox="0 0 11.4 6.2"><path d="M0 0 L5.7 6.2 L11.4 0" fill="none" stroke="#f0f0f0" stroke-width="1.5" stroke-linecap="round" stroke-linejoin="round"/></svg>
<span class="a t" style="left:1282.50px;top:774.80px;font-size:12px;line-height:17px;color:#c8c8c8;letter-spacing:0.362px;">Margin</span>
<div class="a" style="left:1362px;top:768px;width:75px;height:29px;background:#2a2a2a;border:1px solid #1b1b1b;box-sizing:border-box;"></div>
<span class="a t" style="left:1423.30px;top:774.80px;font-size:12px;line-height:17px;color:#c8c8c8;">0</span>
<div class="a" style="left:1473px;top:768px;width:85px;height:29px;background:#2a2a2a;border:1px solid #1b1b1b;box-sizing:border-box;"></div>
<div class="a" style="left:1501px;top:768px;width:1px;height:29px;background:#1b1b1b;"></div>
<div class="a" style="left:1530px;top:768px;width:1px;height:29px;background:#1b1b1b;"></div>
<svg class="a" style="left:1480.5px;top:775.5px;" width="14" height="14" viewBox="0 0 14 14"><path d="M1 1 V13" stroke="#d8d8d8" stroke-width="1.2"/><rect x="4.1" y="1.6" width="8.8" height="10.8" fill="none" stroke="#d8d8d8" stroke-width="1.2"/></svg>
<svg class="a" style="left:1508.5px;top:775.5px;" width="14" height="14" viewBox="0 0 14 14"><path d="M7 0.5 V13.5" stroke="#d8d8d8" stroke-width="1.2"/><rect x="1.6" y="2.6" width="10.8" height="8.8" fill="none" stroke="#d8d8d8" stroke-width="1.2"/></svg>
<svg class="a" style="left:1536.5px;top:775.5px;" width="14" height="14" viewBox="0 0 14 14"><path d="M13 1 V13" stroke="#2f95c8" stroke-width="1.2"/><rect x="1.1" y="1.6" width="8.8" height="10.8" fill="none" stroke="#2f95c8" stroke-width="1.2"/></svg>
<div class="a" style="left:1233px;top:807px;width:377px;height:21px;background:#333333;"></div>
<svg class="a" style="left:1237px;top:815.2px;" width="8" height="4" viewBox="0 0 8 4"><path d="M0 0 L8 0 L4 4 Z" fill="#b0b0b0"/></svg>
<span class="a t" style="left:1255.00px;top:809.00px;font-size:12px;line-height:17px;color:#c8c8c8;letter-spacing:-0.314px;">ALIGNMENT</span>
<span class="a t" style="left:1265.00px;top:844.80px;font-size:12px;line-height:17px;color:#6c6c6c;letter-spacing:0.328px;">Alignment</span>
<span class="a t" style="left:1241.50px;top:878.80px;font-size:12px;line-height:17px;color:#6c6c6c;letter-spacing:0.142px;">Distribute ob...</span>
<span class="a t" style="left:1243.00px;top:912.80px;font-size:12px;line-height:17px;color:#6c6c6c;letter-spacing:0.086px;">Distribute sp...</span>
<span class="a t" style="left:1251.00px;top:946.80px;font-size:12px;line-height:17px;color:#6c6c6c;letter-spacing:-0.060px;">Pixel spacing</span>
<span class="a t" style="left:1279.50px;top:980.80px;font-size:12px;line-height:17px;color:#6c6c6c;letter-spacing:0.210px;">Align to</span>
<div class="a" style="left:1363.0px;top:839.0px;width:27px;height:27px;background:#303030;"></div>
<svg class="a" style="left:1369.5px;top:845.5px;" width="14" height="14" viewBox="0 0 14 14"><path d="M1 0.5 V13.5" stroke="#cfcfcf" stroke-width="1.2" fill="none"/><rect x="3.5" y="2.5" width="9" height="3" fill="#cfcfcf"/><rect x="3.5" y="8.5" width="5.5" height="3" fill="#cfcfcf"/></svg>
<div class="a" style="left:1391.0px;top:839.0px;width:27px;height:27px;background:#303030;"></div>
<svg class="a" style="left:1397.5px;top:845.5px;" width="14" height="14" viewBox="0 0 14 14"><path d="M7 0.5 V13.5" stroke="#cfcfcf" stroke-width="1.2" fill="none"/><rect x="2.5" y="2.5" width="9" height="3" fill="#cfcfcf"/><rect x="4" y="8.5" width="6" height="3" fill="#cfcfcf"/></svg>
<div class="a" style="left:1419.0px;top:839.0px;width:27px;height:27px;background:#303030;"></div>
<svg class="a" style="left:1425.5px;top:845.5px;" width="14" height="14" viewBox="0 0 14 14"><path d="M13 0.5 V13.5" stroke="#cfcfcf" stroke-width="1.2" fill="none"/><rect x="5" y="2.5" width="5.5" height="3" fill="#cfcfcf"/><rect x="1.5" y="8.5" width="9" height="3" fill="#cfcfcf"/></svg>
<div class="a" style="left:1484.0px;top:839.0px;width:27px;height:27px;background:#303030;"></div>
<svg class="a" style="left:1490.5px;top:845.5px;" width="14" height="14" viewBox="0 0 14 14"><path d="M0.5 1 H13.5" stroke="#cfcfcf" stroke-width="1.2" fill="none"/><rect x="2.5" y="3.5" width="3" height="9" fill="#cfcfcf"/><rect x="8.5" y="3.5" width="3" height="5.5" fill="#cfcfcf"/></svg>
<div class="a" style="left:1512.0px;top:839.0px;width:27px;height:27px;background:#303030;"></div>
<svg class="a" style="left:1518.5px;top:845.5px;" width="14" height="14" viewBox="0 0 14 14"><path d="M0.5 7 H13.5" stroke="#cfcfcf" stroke-width="1.2" fill="none"/><rect x="2.5" y="2.5" width="3" height="9" fill="#cfcfcf"/><rect x="8.5" y="4" width="3" height="6" fill="#cfcfcf"/></svg>
<div class="a" style="left:1540.0px;top:839.0px;width:27px;height:27px;background:#303030;"></div>
<svg class="a" style="left:1546.5px;top:845.5px;" width="14" height="14" viewBox="0 0 14 14"><path d="M0.5 13 H13.5" stroke="#cfcfcf" stroke-width="1.2" fill="none"/><rect x="2.5" y="5" width="3" height="5.5" fill="#cfcfcf"/><rect x="8.5" y="1.5" width="3" height="9" fill="#cfcfcf"/></svg>
<div class="a" style="left:1363.0px;top:873.0px;width:27px;height:27px;background:#303030;"></div>
<svg class="a" style="left:1369.5px;top:879.5px;" width="14" height="14" viewBox="0 0 14 14"><path d="M1 0.5 V13.5" stroke="#cfcfcf" stroke-width="1.2" fill="none"/><rect x="4" y="3" width="8" height="8" fill="#cfcfcf"/></svg>
<div class="a" style="left:1391.0px;top:873.0px;width:27px;height:27px;background:#303030;"></div>
<svg class="a" style="left:1397.5px;top:879.5px;" width="14" height="14" viewBox="0 0 14 14"><path d="M7 0.5 V13.5" stroke="#cfcfcf" stroke-width="1.2" fill="none"/><rect x="3" y="3" width="8" height="8" fill="#cfcfcf"/></svg>
<div class="a" style="left:1419.0px;top:873.0px;width:27px;height:27px;background:#303030;"></div>
<svg class="a" style="left:1425.5px;top:879.5px;" width="14" height="14" viewBox="0 0 14 14"><path d="M13 0.5 V13.5" stroke="#cfcfcf" stroke-width="1.2" fill="none"/><rect x="2" y="3" width="8" height="8" fill="#cfcfcf"/></svg>
<div class="a" style="left:1484.0px;top:873.0px;width:27px;height:27px;background:#303030;"></div>
<svg class="a" style="left:1490.5px;top:879.5px;" width="14" height="14" viewBox="0 0 14 14"><path d="M0.5 1 H13.5" stroke="#cfcfcf" stroke-width="1.2" fill="none"/><rect x="3" y="4" width="8" height="8" fill="#cfcfcf"/></svg>
<div class="a" style="left:1512.0px;top:873.0px;width:27px;height:27px;background:#303030;"></div>
<svg class="a" style="left:1518.5px;top:879.5px;" width="14" height="14" viewBox="0 0 14 14"><path d="M0.5 7 H13.5" stroke="#cfcfcf" stroke-width="1.2" fill="none"/><rect x="3" y="3" width="8" height="8" fill="#cfcfcf"/></svg>
<div class="a" style="left:1540.0px;top:873.0px;width:27px;height:27px;background:#303030;"></div>
<svg class="a" style="left:1546.5px;top:879.5px;" width="14" height="14" viewBox="0 0 14 14"><path d="M0.5 13 H13.5" stroke="#cfcfcf" stroke-width="1.2" fill="none"/><rect x="3" y="2" width="8" height="8" fill="#cfcfcf"/></svg>
<div class="a" style="left:1363.0px;top:907.0px;width:27px;height:27px;background:#303030;"></div>
<svg class="a" style="left:1369.5px;top:913.5px;" width="14" height="14" viewBox="0 0 14 14"><path d="M1 1 V13 M13 1 V13" stroke="#cfcfcf" stroke-width="1.2" fill="none"/><rect x="3.5" y="5.5" width="7" height="3" fill="#cfcfcf"/></svg>
<div class="a" style="left:1391.0px;top:907.0px;width:27px;height:27px;background:#303030;"></div>
<svg class="a" style="left:1397.5px;top:913.5px;" width="14" height="14" viewBox="0 0 14 14"><path d="M1 1 H13 M1 13 H13" stroke="#cfcfcf" stroke-width="1.2" fill="none"/><rect x="5.5" y="3.5" width="3" height="7" fill="#cfcfcf"/></svg>
<div class="a" style="left:1428.0px;top:907.0px;width:27px;height:27px;background:#303030;"></div>
<svg class="a" style="left:1434.5px;top:913.5px;" width="14" height="14" viewBox="0 0 14 14"><path d="M2 2 L12 12 M12 2 L2 12" stroke="#cfcfcf" stroke-width="1.2" fill="none"/></svg>
<div class="a" style="left:1456.0px;top:907.0px;width:27px;height:27px;background:#303030;"></div>
<svg class="a" style="left:1462.5px;top:913.5px;" width="14" height="14" viewBox="0 0 14 14"><path d="M1 13.5 V1 H13.5" stroke="#cfcfcf" stroke-width="1.2" fill="none"/><path d="M4 10.8 L10.6 5 M6.6 8.2 L4 10.8 L6.8 13 M8.6 6.2 L10.8 4.6 L13 7.2" stroke="#cfcfcf" stroke-width="1.2" fill="none"/></svg>
<div class="a" style="left:1484.0px;top:907.0px;width:27px;height:27px;background:#303030;"></div>
<svg class="a" style="left:1490.5px;top:913.5px;" width="14" height="14" viewBox="0 0 14 14"><path d="M7 1.2 L12.8 7 L7 12.8 L1.2 7 Z" stroke="#cfcfcf" stroke-width="1.2" fill="none"/></svg>
<div class="a" style="left:1512.0px;top:907.0px;width:27px;height:27px;background:#303030;"></div>
<svg class="a" style="left:1518.5px;top:913.5px;" width="14" height="14" viewBox="0 0 14 14"><path d="M0.5 13 H13 V0.5" stroke="#cfcfcf" stroke-width="1.2" fill="none"/><path d="M3.6 10.6 L10.4 4.6 M1.4 8.2 L3.6 10.8 L6 8.6 M8 2 L10.6 4.4 L8.4 7" stroke="#cfcfcf" stroke-width="1.2" fill="none"/></svg>
<div class="a" style="left:1363px;top:941px;width:73px;height:27px;background:#313131;"></div>
<span class="a t" style="left:1423.30px;top:946.80px;font-size:12px;line-height:17px;color:#5e5e5e;">1</span>
<div class="a" style="left:1363px;top:975px;width:194px;height:27px;background:#313131;"></div>
<span class="a t" style="left:1368.00px;top:980.80px;font-size:12px;line-height:17px;color:#6c6c6c;letter-spacing:-0.047px;">Selection</span>
<svg class="a" style="left:1537.3px;top:985.4px;" width="11.4" height="6.2" viewBox="0 0 11.4 6.2"><path d="M0 0 L5.7 6.2 L11.4 0" fill="none" stroke="#e0e0e0" stroke-width="1.5" stroke-linecap="round" stroke-linejoin="round"/></svg>
<div class="a" style="left:65px;top:1009px;width:1555px;height:42px;background:#202020;"></div>
<svg class="a" style="left:77.5px;top:1022px;" width="17" height="17" viewBox="0 0 17 17"><g fill="none" stroke="#cfcfcf" stroke-width="1.1" stroke-linejoin="round"><circle cx="8.5" cy="8.5" r="3"/><path d="M7 0.9 Q8.5 0.3 10 0.9 L10.6 2.7 Q11.6 3 12.4 3.6 L14.2 3 Q15.3 4 15.8 5.4 L14.6 6.8 Q14.9 8.5 14.6 10.2 L15.8 11.6 Q15.3 13 14.2 14 L12.4 13.4 Q11.6 14 10.6 14.3 L10 16.1 Q8.5 16.7 7 16.1 L6.4 14.3 Q5.4 14 4.6 13.4 L2.8 14 Q1.7 13 1.2 11.6 L2.4 10.2 Q2.1 8.5 2.4 6.8 L1.2 5.4 Q1.7 4 2.8 3 L4.6 3.6 Q5.4 3 6.4 2.7 Z"/></g></svg>
<span class="a t" style="left:129.00px;top:1022.80px;font-size:12px;line-height:17px;color:#c8c8c8;letter-spacing:-0.008px;">Kit</span>
<span class="a t" style="left:178.00px;top:1022.80px;font-size:12px;line-height:17px;color:#666;letter-spacing:0.048px;">Desktop Qt 5.15.5</span>
<svg class="a" style="left:310.5px;top:1027.25px;" width="12" height="6.5" viewBox="0 0 12 6.5"><path d="M0 0 L6.0 6.5 L12 0" fill="none" stroke="#777" stroke-width="1.4" stroke-linecap="round" stroke-linejoin="round"/></svg>
<span class="a t" style="left:360.50px;top:1022.80px;font-size:12px;line-height:17px;color:#c8c8c8;letter-spacing:-0.172px;">Style</span>
<div class="a" style="left:416px;top:1016px;width:160px;height:29px;background:#242424;border:1px solid #1b1b1b;box-sizing:border-box;"></div>
<span class="a t" style="left:422.00px;top:1022.80px;font-size:12px;line-height:17px;color:#c8c8c8;letter-spacing:-0.461px;">Basic</span>
<svg class="a" style="left:554.8px;top:1027.4px;" width="11.4" height="6.2" viewBox="0 0 11.4 6.2"><path d="M0 0 L5.7 6.2 L11.4 0" fill="none" stroke="#f0f0f0" stroke-width="1.5" stroke-linecap="round" stroke-linejoin="round"/></svg>
<svg class="a" style="left:1606px;top:1037px;" width="13" height="13" viewBox="0 0 13 13"><path d="M12.5 1 L1 12.5 M12.5 5 L5 12.5 M12.5 9 L9 12.5" stroke="#3a3a3a" stroke-width="1"/></svg>
<svg class="a" style="left:0;top:0" width="1685" height="1128" viewBox="0 0 1685 1128" shape-rendering="crispEdges"><defs><clipPath id="hc"><polygon points="1502.6,499 1510.4,499 1513.4,502 1513.4,518.8 1520.3,518.8 1520.3,521.8 1531.3,521.8 1531.3,525.2 1539,525.2 1539,529 1542.4,529 1542.4,532.4 1544.6,532.4 1544.6,562 1542,562 1542,573 1538.5,573 1538.5,582.4 1499.4,582.4 1499.4,571.4 1495.6,571.4 1495.6,564.6 1492.6,564.6 1492.6,557.8 1488.8,557.8 1488.8,550 1485.8,550 1485.8,545 1482.4,545 1482.4,532.4 1496,532.4 1496,535.5 1499.4,535.5 1499.4,502"/></clipPath></defs><polygon points="1502.6,499 1510.4,499 1513.4,502 1513.4,518.8 1520.3,518.8 1520.3,521.8 1531.3,521.8 1531.3,525.2 1539,525.2 1539,529 1542.4,529 1542.4,532.4 1544.6,532.4 1544.6,562 1542,562 1542,573 1538.5,573 1538.5,582.4 1499.4,582.4 1499.4,571.4 1495.6,571.4 1495.6,564.6 1492.6,564.6 1492.6,557.8 1488.8,557.8 1488.8,550 1485.8,550 1485.8,545 1482.4,545 1482.4,532.4 1496,532.4 1496,535.5 1499.4,535.5 1499.4,502" fill="#fff" stroke="#e4e4e4" stroke-width="2.2" stroke-linejoin="miter"/><polygon points="1502.6,499 1510.4,499 1513.4,502 1513.4,518.8 1520.3,518.8 1520.3,521.8 1531.3,521.8 1531.3,525.2 1539,525.2 1539,529 1542.4,529 1542.4,532.4 1544.6,532.4 1544.6,562 1542,562 1542,573 1538.5,573 1538.5,582.4 1499.4,582.4 1499.4,571.4 1495.6,571.4 1495.6,564.6 1492.6,564.6 1492.6,557.8 1488.8,557.8 1488.8,550 1485.8,550 1485.8,545 1482.4,545 1482.4,532.4 1496,532.4 1496,535.5 1499.4,535.5 1499.4,502" fill="#fff" stroke="#000" stroke-width="5.4" stroke-linejoin="miter" clip-path="url(#hc)"/><g stroke="#000" stroke-width="2.7" fill="none"><path d="M1500.75 535 V549.8"/><path d="M1512.05 502 V536.5"/><path d="M1521.6 521.8 V536.5"/><path d="M1532.7 525.2 V540"/><path d="M1496 536.8 H1500"/></g></svg>
</body></html>
